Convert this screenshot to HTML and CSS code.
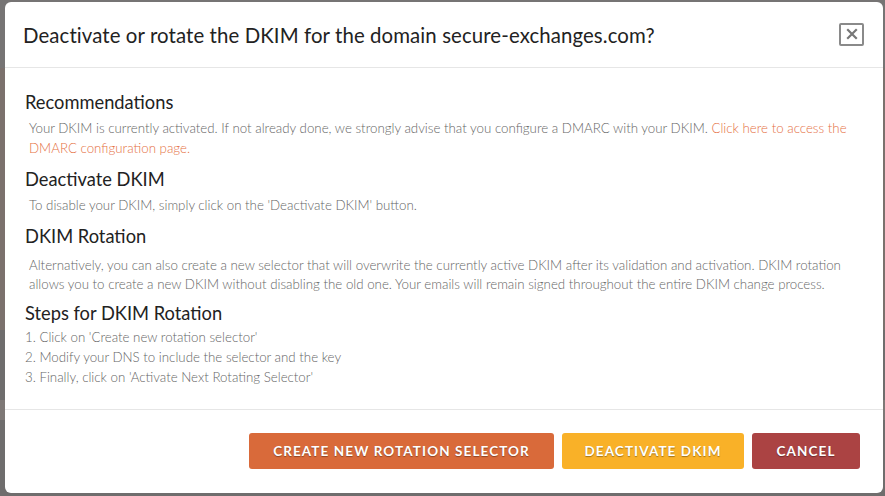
FILE: index.html
```html
<!DOCTYPE html>
<html>
<head>
<meta charset="utf-8">
<link rel="stylesheet" href="styles.css">
</head>
<body>
<div class="backdrop">
  <div class="modal">
    <div class="modal-header">
      <h1 class="modal-title">Deactivate or rotate the DKIM for the domain secure-exchanges.com?</h1>
      <button class="close-btn" aria-label="Close">
        <svg width="12" height="12" viewBox="0 0 12 12"><path d="M2 2 L10 10 M10 2 L2 10" stroke="#777" stroke-width="2.2" stroke-linecap="square"/></svg>
      </button>
    </div>
    <div class="modal-body">
      <h2 class="section-title">Recommendations</h2>
      <p class="section-text">Your DKIM is currently activated. If not already done, we strongly advise that you configure a DMARC with your DKIM. <a class="link" href="#">Click here to access the DMARC configuration page.</a></p>
      <h2 class="section-title">Deactivate DKIM</h2>
      <p class="section-text">To disable your DKIM, simply click on the 'Deactivate DKIM' button.</p>
      <h2 class="section-title">DKIM Rotation</h2>
      <p class="section-text section-text-loose">Alternatively, you can also create a new selector that will overwrite the currently active DKIM after its validation and activation. DKIM rotation allows you to create a new DKIM without disabling the old one. Your emails will remain signed throughout the entire DKIM change process.</p>
      <h2 class="section-title">Steps for DKIM Rotation</h2>
      <ol class="steps">
        <li>1. Click on 'Create new rotation selector'</li>
        <li>2. Modify your DNS to include the selector and the key</li>
        <li>3. Finally, click on 'Activate Next Rotating Selector'</li>
      </ol>
    </div>
    <div class="modal-footer">
      <button class="btn btn-orange">Create new rotation selector</button>
      <button class="btn btn-yellow">Deactivate DKIM</button>
      <button class="btn btn-red">Cancel</button>
    </div>
  </div>
</div>
</body>
</html>
```

FILE: styles.css
```css
html, body {
  margin: 0;
  padding: 0;
}
body {
  width: 885px;
  height: 496px;
  overflow: hidden;
  font-family: Lato, "Open Sans", sans-serif;
}
.backdrop {
  width: 885px;
  height: 496px;
  box-sizing: border-box;
  padding: 2px 2px 3px 5px;
  background: linear-gradient(to bottom, #767474 0, #767474 68px, #7b716d 68px, #7b716d 330px, #6f6d6d 330px, #6f6d6d 400px, #7e7876 400px, #7e7876 420px, #6f6d6d 420px);
}
.modal {
  width: 878px;
  height: 491px;
  background: #fff;
  border-radius: 6px;
  display: flex;
  flex-direction: column;
  box-sizing: border-box;
}
.modal-header {
  height: 66px;
  box-sizing: border-box;
  border-bottom: 1px solid #e6e6e6;
  display: flex;
  align-items: center;
  justify-content: space-between;
  padding: 0 19px 0 18px;
}
.modal-title {
  margin: 0;
  font-size: 20.4px;
  font-weight: 400;
  color: #222;
  letter-spacing: 0.1px;
}
.close-btn {
  width: 25px;
  height: 23px;
  border: 2px solid #8a8a8a;
  border-radius: 2px;
  background: #fff;
  padding: 0;
  display: flex;
  align-items: center;
  justify-content: center;
  margin-top: -1px;
}
.modal-body {
  flex: 1;
  padding: 22px 20px 0 20px;
}
.section-title {
  margin: 0;
  font-size: 18.3px;
  font-weight: 400;
  color: #222;
  line-height: 24px;
}
.section-text {
  margin: 5px 0 8.5px 4px;
  font-size: 13.3px;
  color: #666;
  line-height: 19.5px;
  font-weight: 300;
}
.section-text-loose {
  margin-top: 8px;
  margin-bottom: 6px;
}
.link {
  color: #e5703f;
  text-decoration: none;
}
.steps {
  list-style: none;
  margin: 2px 0 0 0;
  padding: 0;
  font-size: 13.3px;
  color: #666;
  line-height: 20px;
  font-weight: 300;
}
.modal-footer {
  height: 84px;
  box-sizing: border-box;
  border-top: 1px solid #e6e6e6;
  display: flex;
  justify-content: flex-end;
  align-items: flex-start;
  gap: 8px;
  padding: 23px 23px 0 0;
}
.btn {
  height: 36px;
  border: none;
  border-radius: 3px;
  color: #fff;
  font-family: Lato, sans-serif;
  font-weight: 700;
  font-size: 13.5px;
  letter-spacing: 1.1px;
  text-transform: uppercase;
  padding: 0;
  text-shadow: 0 1px 1px rgba(0,0,0,0.35);
}
.btn-orange { background: #d96a3a; width: 305px; }
.btn-yellow { background: #f9b128; width: 182px; }
.btn-red { background: #ab4343; width: 108px; }
```
